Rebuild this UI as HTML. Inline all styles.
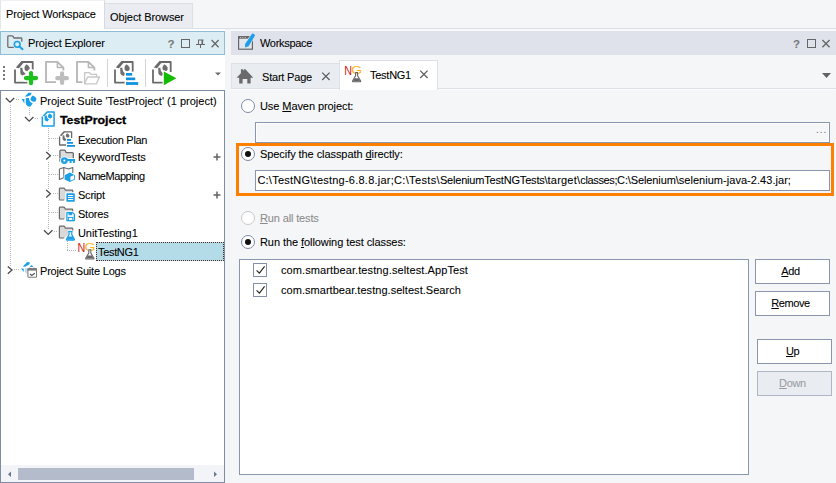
<!DOCTYPE html>
<html>
<head>
<meta charset="utf-8">
<title>TestNG1</title>
<style>
html,body{margin:0;padding:0;}
body{width:836px;height:483px;overflow:hidden;background:#f5f6f8;font-family:"Liberation Sans",sans-serif;font-size:11px;color:#000;position:relative;}
.abs{position:absolute;}
svg{position:absolute;overflow:visible;}
.t{position:absolute;white-space:nowrap;line-height:14px;height:14px;-webkit-text-stroke:0.08px currentColor;}
u{text-decoration:underline;text-underline-offset:1px;text-decoration-thickness:1px;}
/* top tabs */
#topline{left:0;top:28px;width:836px;height:1px;background:#dcdfe6;}
#tab1{left:0;top:0;width:105px;height:29px;background:#fff;border-right:1px solid #d5d9e1;border-left:1px solid #e2e5ea;border-top:1px solid #eef0f3;box-sizing:border-box;}
#tab2{left:105px;top:3px;width:88px;height:26px;background:#eaecf1;border:1px solid #dcdfe6;border-left:none;box-sizing:border-box;}
#underline{left:0;top:29px;width:836px;height:2px;background:#f8f9fa;}
/* panels */
#leftbg{left:0;top:29px;width:225px;height:454px;background:#fff;}
#split{left:225px;top:29px;width:6px;height:454px;background:#f4f5f7;}
#pehead{left:0;top:31px;width:225px;height:24px;background:#dceef4;border:1px solid #8fbdd6;box-sizing:border-box;}
#wshead{left:231px;top:31px;width:605px;height:24px;background:#dfe2ea;}
/* tree */
#tree{left:0;top:90px;width:225px;height:393px;background:#fff;border:1px solid #808ca4;box-sizing:border-box;}
.sel{left:96px;top:242px;width:128px;height:19px;background:#b4dbe8;border:1px dotted #4a2a20;box-sizing:border-box;}
.hd{position:absolute;height:1px;background-image:linear-gradient(90deg,#9a9a9a 50%,transparent 50%);background-size:2px 1px;}
.vd{position:absolute;width:1px;background-image:linear-gradient(180deg,#9a9a9a 50%,transparent 50%);background-size:1px 2px;}
/* scrollbar */
#hsb{left:1px;top:465px;width:223px;height:17px;background:#f3f4f7;}
#thumb{left:17px;top:3px;width:176px;height:12px;background:#b4bccc;}
/* workspace tabs */
#tabstart{left:231px;top:63px;width:109px;height:26px;background:#e9ecf1;border:1px solid #dde0e7;border-bottom:none;box-sizing:border-box;}
#tabng{left:339px;top:60px;width:99px;height:30px;background:#fff;border:1px solid #dde0e7;border-bottom:none;box-sizing:border-box;}
#tabline{left:231px;top:88px;width:109px;height:1px;background:#dde0e7;}
#tabline2{left:438px;top:88px;width:398px;height:1px;background:#dde0e7;}
.radio{position:absolute;width:14px;height:14px;border:1px solid #7f8ca3;border-radius:50%;background:#fff;box-sizing:border-box;}
.radio.on::after{content:"";position:absolute;left:3px;top:3px;width:6px;height:6px;border-radius:50%;background:#111;}
.radio.dis{border-color:#c9c9c9;}
.edit{position:absolute;box-sizing:border-box;border:1px solid #8a96ad;background:#fff;}
.btn{-webkit-text-stroke:0.08px currentColor;position:absolute;box-sizing:border-box;border:1px solid #8a96ad;background:#fff;text-align:center;line-height:23px;height:25px;width:75px;padding-right:4px;}
.btn.dis{background:#e9ecf0;color:#9a9da5;border-color:#aeb6c7;}
#hl{left:236px;top:143px;width:598px;height:53px;border:3px solid #ff8000;box-sizing:border-box;}
.cb{position:absolute;width:14px;height:14px;border:1px solid #8390a6;background:#fff;box-sizing:border-box;}
</style>
</head>
<body>
<!-- top tabs -->
<div class="abs" id="underline"></div>
<div class="abs" id="leftbg"></div>
<div class="abs" id="split"></div>
<div class="abs" id="topline"></div>
<div class="abs" id="tab1"></div>
<div class="abs" id="tab2"></div>
<div class="t" style="letter-spacing:-0.14px;left:6px;top:7px;">Project Workspace</div>
<div class="t" style="letter-spacing:-0.09px;left:110px;top:10px;">Object Browser</div>

<!-- Project explorer header -->
<div class="abs" id="pehead"></div>
<div class="t" style="letter-spacing:-0.09px;left:28px;top:36px;">Project Explorer</div>
<!--ICON:pehead-->
<!-- workspace header -->
<div class="abs" id="wshead"></div>
<div class="t" style="letter-spacing:-0.31px;left:260px;top:36px;">Workspace</div>
<!--ICON:wshead-->

<!-- pe header icon -->
<svg style="left:0;top:0" width="836" height="90" viewBox="0 0 836 90">
 <g fill="none" stroke="#6e6e6e" stroke-width="1.3" stroke-linejoin="round" stroke-linecap="round">
  <path d="M13.3 47.4 H8.6 Q7.8 47.4 7.8 46.6 V36.6 Q7.8 35.8 8.6 35.8 H12 Q12.8 35.8 13.2 36.6 L13.9 38 H21 Q21.8 38 21.8 38.8 V41.2"/>
 </g>
 <circle cx="17.2" cy="44.3" r="2.9" fill="none" stroke="#1b9fe6" stroke-width="1.5"/>
 <path d="M19.4 46.5 L22.6 49.2" stroke="#1b9fe6" stroke-width="1.9" stroke-linecap="round"/>
 <!-- header buttons left -->
 <text x="167.4" y="47.8" font-size="11.5" font-weight="bold" fill="#777" font-family="Liberation Sans, sans-serif">?</text>
 <rect x="181.5" y="39.5" width="8" height="8" fill="none" stroke="#666" stroke-width="1"/>
 <g stroke="#666" stroke-width="1" fill="none">
  <path d="M198 40 H203.5 M198.5 40 V44.5 M196 44.5 H205 M200.5 44.5 V48"/><path d="M202.3 40 V44.5" stroke-width="1.6"/>
  <path d="M211.6 40 L218.6 47.2 M218.6 40 L211.6 47.2" stroke-width="1.3"/>
 </g>
 <!-- workspace header icon -->
 <rect x="238.6" y="36.6" width="13.8" height="12.6" fill="#e3e6ed" stroke="#676767" stroke-width="1.2"/>
 <rect x="238" y="36" width="15" height="2.7" fill="#676767"/>
 <g fill="#c4c4c4"><rect x="240" y="36.9" width="1.1" height="1"/><rect x="242.3" y="36.9" width="1.1" height="1"/><rect x="244.6" y="36.9" width="1.1" height="1"/></g>
 <path d="M252.2 33.6 Q254.4 33.4 255 35.6 L248.6 46.2 L245.2 47.6 L245 44.2 Z" fill="#1b9fe6" stroke="#dfe2ea" stroke-width="1.4" paint-order="stroke" stroke-linejoin="round"/>
 <!-- header buttons right -->
 <text x="793" y="47.8" font-size="11.5" font-weight="bold" fill="#777" font-family="Liberation Sans, sans-serif">?</text>
 <rect x="807.5" y="39.5" width="8" height="8" fill="none" stroke="#666" stroke-width="1"/>
 <path d="M822.4 40 L829.6 47.2 M829.6 40 L822.4 47.2" stroke="#666" stroke-width="1.3" fill="none"/>
 <!-- tab dropdown -->
 <path d="M822 73 H831 L826.5 78 Z" fill="#5f6368"/>
 <!-- toolbar grip -->
 <g fill="#7a7a7a"><rect x="3" y="66" width="2" height="2"/><rect x="3" y="70" width="2" height="2"/><rect x="3" y="74" width="2" height="2"/><rect x="3" y="78" width="2" height="2"/></g>
 <!-- separators -->
 <rect x="107" y="59" width="1" height="28" fill="#d4d4d4"/>
 <rect x="145" y="59" width="1" height="28" fill="#d4d4d4"/>
 <path d="M215 72.5 H221 L218 75.5 Z" fill="#6a6a6a"/>
 <!-- tc doc symbol -->
 <defs>
  <g id="tcdoc">
   <path d="M1 9 V22.2 H18.7 V1.6 H8" fill="none" stroke="#6a6a6a" stroke-width="1.8" stroke-linejoin="round"/>
   <path d="M1.8 7.2 L7.4 0.7 H11 L5 7.8 Z" fill="#6a6a6a"/>
   <path d="M12.2 3.8 Q14.6 4.6 15.6 7 Q16.2 9.6 14.2 10.6 Q11.6 11.2 10.6 9 Q9.8 6.4 12.2 3.8 Z" fill="#6f6f6f"/>
   <path d="M6.2 7.4 H8.4 Q8.2 11.4 11.6 13.2 L10 15.6 Q7.4 15.4 6.4 13.4 Z" fill="#6f6f6f"/>
  </g>
 </defs>
 <!-- icon 1: new project -->
 <use href="#tcdoc" x="14" y="60.4"/>
 <path d="M31 72.6 V83.6 M25.5 78.1 H36.5" stroke="#fff" stroke-width="7.4" stroke-linecap="round"/>
 <path d="M31 73 V83.2 M25.9 78.1 H36.1" stroke="#1dc01d" stroke-width="4.2" stroke-linecap="round"/>
 <!-- icon 2: new item (disabled) -->
 <g fill="none" stroke="#b6b6b6" stroke-width="1.8" stroke-linejoin="round">
  <path d="M63.4 70.4 V67.6 L57.4 61.9 H46 V82.2 H56"/>
  <path d="M57.4 61.9 V67.6 H63.4" stroke-width="1.5"/>
 </g>
 <path d="M62.1 73.4 V83 M57.3 78.2 H66.9" stroke="#bdbdbd" stroke-width="4.2" stroke-linecap="round"/>
 <!-- icon 3: open (disabled) -->
 <g fill="none" stroke="#b6b6b6" stroke-width="1.8" stroke-linejoin="round">
  <path d="M94.4 70.4 V67.6 L88.4 61.9 H77 V82.2 H82.4"/>
  <path d="M88.4 61.9 V67.6 H94.4" stroke-width="1.5"/>
 </g>
 <g fill="#fff" stroke="#c6c6c6" stroke-width="1.3" stroke-linejoin="round">
  <path d="M84.6 83.6 V72.6 H89.6 L90.8 74.4 H96.6 V76.6"/>
  <path d="M84.6 83.8 L87.6 77 H99.4 L96.4 83.8 Z"/>
 </g>
 <!-- icon 4: execution plan -->
 <use href="#tcdoc" x="114" y="60.4"/>
 <rect x="124.6" y="71.6" width="15" height="15" fill="#fff"/>
 <g fill="#0f92df"><rect x="126" y="73" width="6.2" height="2.7"/><rect x="126" y="77.5" width="9.2" height="2.7"/><rect x="126" y="82.1" width="12.2" height="2.8"/></g>
 <!-- icon 5: run project -->
 <use href="#tcdoc" x="152" y="60.4"/>
 <rect x="163" y="72" width="9.5" height="12" fill="#fff"/>
 <path d="M163.8 71.4 V85.2 L176.4 78.2 Z" fill="#14bc00" stroke="#fff" stroke-width="2.4" stroke-linejoin="round" paint-order="stroke"/>
</svg>


<!-- tree -->
<div class="abs" id="tree"></div>
<div class="abs sel"></div>
<!--ICON:tree-->
<div class="t" style="left:40px;top:94px;">Project Suite 'TestProject' (1 project)</div>
<div class="t" style="left:60px;top:113px;font-weight:bold;-webkit-text-stroke:0.3px #000;transform:scaleX(1.12);transform-origin:0 0;">TestProject</div>
<div class="t" style="letter-spacing:-0.3px;left:78px;top:133px;">Execution Plan</div>
<div class="t" style="letter-spacing:-0.07px;left:78px;top:150px;">KeywordTests</div>
<div class="t" style="letter-spacing:-0.45px;left:78px;top:169px;">NameMapping</div>
<div class="t" style="letter-spacing:-0.23px;left:78px;top:188px;">Script</div>
<div class="t" style="letter-spacing:-0.22px;left:78px;top:207px;">Stores</div>
<div class="t" style="letter-spacing:-0.07px;left:78px;top:226px;">UnitTesting1</div>
<div class="t" style="left:98px;top:245px;letter-spacing:-0.33px;">TestNG1</div>
<div class="t" style="letter-spacing:-0.19px;left:40px;top:264px;">Project Suite Logs</div>
<div class="abs" id="hsb"><div class="abs" id="thumb"></div></div>
<!--ICON:scroll-->

<!-- workspace tabs -->
<div class="abs" id="tabstart"></div>
<div class="abs" id="tabline"></div>
<div class="abs" id="tabline2"></div>
<div class="abs" style="left:231px;top:89px;width:604px;height:1px;background:#fdfdfe;"></div>
<div class="abs" id="tabng"></div>
<div class="t" style="letter-spacing:-0.2px;left:262px;top:70px;">Start Page</div>
<div class="t" style="left:370px;top:68px;letter-spacing:-0.26px;">TestNG1</div>
<!--ICON:tabs-->

<!-- content -->
<div class="radio" style="left:241px;top:99px;"></div>
<div class="t" style="letter-spacing:-0.08px;left:260px;top:99px;">Use <u>M</u>aven project:</div>
<div class="edit" style="left:255px;top:122px;width:575px;height:21px;background:#f5f6f8;box-shadow:inset 0 0 0 1px #fff;"></div>
<div class="t" style="left:816px;top:123px;color:#777;letter-spacing:1px;font-size:10px;">...</div>
<div class="abs" id="hl"></div>
<div class="radio on" style="left:241px;top:147px;"></div>
<div class="t" style="letter-spacing:-0.07px;left:260px;top:147px;">Specify the classpath <u>d</u>irectly:</div>
<div class="edit" style="left:255px;top:170px;width:575px;height:21px;"></div>
<div class="t" style="left:257px;top:173px;width:540px;"><span style="position:absolute;left:0.4px;letter-spacing:0.240px;">C:\TestNG\</span><span style="position:absolute;left:56.6px;letter-spacing:0.233px;">testng-6.8.8.jar;</span><span style="position:absolute;left:137.0px;letter-spacing:0.345px;">C:\Tests\</span><span style="position:absolute;left:182.9px;letter-spacing:-0.183px;">SeleniumTestNGTests\</span><span style="position:absolute;left:290.5px;letter-spacing:0.230px;">target\</span><span style="position:absolute;left:323.3px;letter-spacing:-0.369px;">classes;</span><span style="position:absolute;left:360.1px;letter-spacing:-0.115px;">C:\Selenium\</span><span style="position:absolute;left:421.7px;letter-spacing:0.044px;">selenium-java-2.43.jar;</span></div>
<div class="radio dis" style="left:241px;top:211px;"></div>
<div class="t" style="letter-spacing:-0.14px;left:260px;top:211px;color:#8b8b8b;"><u>R</u>un all tests</div>
<div class="radio on" style="left:241px;top:235px;"></div>
<div class="t" style="letter-spacing:-0.07px;left:260px;top:235px;">Run the <u>f</u>ollowing test classes:</div>
<div class="edit" style="left:239px;top:259px;width:510px;height:216px;"></div>
<div class="cb" style="left:253px;top:263px;"></div>
<div class="t" style="letter-spacing:0.1px;left:281px;top:263px;">com.smartbear.testng.seltest.AppTest</div>
<div class="cb" style="left:253px;top:283px;"></div>
<div class="t" style="letter-spacing:0.04px;left:281px;top:283px;">com.smartbear.testng.seltest.Search</div>
<svg style="left:0;top:0" width="836" height="483" viewBox="0 0 836 483">
 <defs>
  <g id="fold16">
   <path d="M5.6 12.4 H1.6 Q0.8 12.4 0.8 11.6 V1.4 Q0.8 0.6 1.6 0.6 H5 Q5.8 0.6 6.2 1.4 L6.8 2.6 H13.4 Q14.2 2.6 14.2 3.4 V5" fill="#d9d9d9" stroke="#6a6a6a" stroke-width="1.2" stroke-linejoin="round"/>
  </g>
  <g id="chevd"><path d="M0 0 L4.2 4.2 L8.4 0" fill="none" stroke="#4a4a4a" stroke-width="1.3"/></g>
  <g id="chevr"><path d="M0 0 L4.2 3.7 L0 7.4" fill="none" stroke="#4a4a4a" stroke-width="1.3"/></g>
  <g id="flask">
   <path d="M3.4 0.4 H6.4 M3.9 0.4 V3.6 L0.8 8.8 Q0.6 9.6 1.6 9.6 H8.2 Q9.2 9.6 9 8.8 L5.9 3.6 V0.4" fill="#fff" stroke="#666" stroke-width="1.1" stroke-linejoin="round"/>
   <path d="M2.9 6 H6.9 L8.6 9 H1.2 Z" fill="#666"/>
  </g>
 </defs>
 <!-- dotted connectors -->
 <g fill="none" stroke="#b4b4b4" stroke-width="1" stroke-dasharray="1 1" shape-rendering="crispEdges">
  <path d="M10.5 105 V266"/>
  <path d="M16 99.5 H20"/>
  <path d="M29.5 108 V116"/>
  <path d="M35 118.5 H39"/>
  <path d="M48.5 128 V229"/>
  <path d="M49 138.5 H58"/>
  <path d="M53 155.5 H58"/>
  <path d="M49 174.5 H58"/>
  <path d="M53 193.5 H58"/>
  <path d="M49 212.5 H58"/>
  <path d="M54 231.5 H58"/>
  <path d="M67.5 241 V251"/>
  <path d="M67 250.5 H77"/>
  <path d="M14 269.5 H19"/>
 </g>
 <!-- expanders -->
 <g fill="#fff"><rect x="45" y="151" width="7" height="11"/><rect x="45" y="189" width="7" height="11"/></g>
 <use href="#chevd" x="5.8" y="98"/>
 <use href="#chevd" x="25" y="117"/>
 <use href="#chevr" x="46.2" y="152"/>
 <use href="#chevr" x="46.2" y="190"/>
 <use href="#chevd" x="44" y="230.2"/>
 <use href="#chevr" x="7.8" y="266.4"/>
 <!-- TC suite logo -->
 <g fill="#1b9fe6">
  <path d="M24.8 96.6 L28.6 92.8 H31.6 L30.6 95.2 L27.4 96.6 Z"/>
  <path d="M21.6 99 H24.4 V103.6 Z"/>
  <path d="M25.8 98 H29 Q28.8 101.6 32.8 103.4 L30.2 106.8 Q26.4 106.6 25.8 103.6 Z"/>
  <path d="M32.6 95.4 Q35.6 96.2 36.4 98.6 Q36.6 101.2 34.2 101.8 Q31.4 102 30.6 99.6 Q30.4 97.2 32.6 95.4 Z"/>
 </g>
 <!-- project icon -->
 <path d="M42.3 116.6 V125.9 H54.1 V112.1 H47.4" fill="none" stroke="#1b9fe6" stroke-width="1.5" stroke-linejoin="round"/>
 <path d="M42.6 115.8 L46.6 111.4 H48.8 L44.2 116.2 Z" fill="#1b9fe6"/>
 <path d="M49.4 113.6 Q51.6 114.2 52.2 116 Q52.4 118 50.6 118.4 Q48.6 118.6 47.9 116.8 Q47.6 115 49.4 113.6 Z" fill="#1b9fe6"/>
 <path d="M44.6 115.4 H46.8 Q46.8 118.4 49 119.4 L47.6 121.4 Q45.2 121.2 44.6 119.4 Z" fill="#1b9fe6"/>
 <!-- execution plan -->
 <path d="M59.6 136.4 V145 H71.6 V131.8 H64.6" fill="none" stroke="#6a6a6a" stroke-width="1.3" stroke-linejoin="round"/>
 <path d="M59.8 135.6 L63.6 131.2 H65.8 L61.4 136 Z" fill="#6a6a6a"/>
 <path d="M67 133.2 Q68.8 133.8 69.4 135.4 Q69.6 137.2 68.2 137.6 Q66.4 137.8 65.8 136.2 Q65.4 134.6 67 133.2 Z" fill="#6f6f6f"/>
 <path d="M62.6 135.2 H64.2 Q64.2 138 66.4 139.2 L65.2 141 Q63.2 140.8 62.6 139.2 Z" fill="#6f6f6f"/>
 <rect x="66" y="138" width="10" height="10" fill="#fff"/>
 <g fill="#0f92df"><rect x="67" y="139" width="4" height="1.8"/><rect x="67" y="142" width="6" height="1.8"/><rect x="67" y="145" width="8" height="1.8"/></g>
 <!-- keyword tests -->
 <path d="M59.9 162 V151 Q59.9 150.1 60.8 150.1 H64.4 Q65.2 150.1 65.5 150.9 L66.1 152.6 H72.4 Q73.3 152.6 73.3 153.5 V162 Z" fill="#dddddd" stroke="#6a6a6a" stroke-width="1.3" stroke-linejoin="round"/>
 <rect x="59" y="158.2" width="16.4" height="6" fill="#fff"/>
 <path d="M59.9 158.4 V161.6" stroke="#6a6a6a" stroke-width="1.3"/>
 <g><circle cx="64.4" cy="160.6" r="2.2" fill="#fff" stroke="#fff" stroke-width="4"/><path d="M66 160.6 H74.6 M72 160.6 V163.4 M74.2 160.6 V163.4" stroke="#fff" stroke-width="3.6" fill="none"/>
 <circle cx="64.4" cy="160.6" r="2.3" fill="#fff" stroke="#1b9fe6" stroke-width="2.3"/><path d="M66.8 160.1 H75 M70.6 160.1 V163 M73.9 160.1 V163" stroke="#1b9fe6" stroke-width="2" fill="none"/></g>
 <!-- name mapping -->
 <path d="M59.4 169 L63.8 167.4 L68.4 169 L72.8 167.4 V173 M59.4 169 V179.4 L63.8 177.8 M63.8 167.4 V177.8" fill="none" stroke="#6a6a6a" stroke-width="1.1" stroke-linejoin="round"/>
 <path d="M64.6 175.2 L69.8 172.6 L75 175.2 V179.6 L69.8 182 L64.6 179.6 Z" fill="#1b9fe6" stroke="#fff" stroke-width="1.6" paint-order="stroke"/>
 <path d="M70.4 176.8 L74.2 175 V179 L70.4 180.8 Z" fill="#fff"/>
 <!-- script -->
 <use href="#fold16" x="58.6" y="187.6"/>
 <rect x="65.4" y="192.4" width="10" height="10" fill="#fff"/>
 <rect x="66.4" y="193.2" width="8.4" height="8.6" rx="0.8" fill="#1b9fe6"/>
 <path d="M68 195.5 H73.2 M68 197.5 H73.2 M68 199.5 H73.2" stroke="#fff" stroke-width="1"/>
 <!-- stores -->
 <use href="#fold16" x="58.6" y="206.6"/>
 <rect x="65.4" y="211.4" width="10" height="10" fill="#fff"/>
 <path d="M66.9 212.6 H72.6 L74.4 214.4 V220.6 H66.9 Z" fill="#fff" stroke="#1b9fe6" stroke-width="1.3" stroke-linejoin="round"/>
 <rect x="68.6" y="212.6" width="3.6" height="2.6" fill="#1b9fe6"/>
 <rect x="68.4" y="217.4" width="4.4" height="3.2" fill="none" stroke="#1b9fe6" stroke-width="1"/>
 <!-- unit testing -->
 <use href="#fold16" x="58.6" y="225.6"/>
 <path d="M65 240.6 L68.4 234.2 V230.6 H72.4 V234.2 L75.8 240.6 Z" fill="#fff"/>
 <path d="M68.2 231.6 H72.6 M69 231.6 V234.6 L66.4 239.4 Q66.2 240.2 67 240.2 H73.8 Q74.6 240.2 74.4 239.4 L71.8 234.6 V231.6" fill="#fff" stroke="#1b9fe6" stroke-width="1.2" stroke-linejoin="round"/>
 <path d="M68.2 236.6 H72.6 L74.2 239.8 H66.6 Z" fill="#1b9fe6"/>
 <!-- NG icon in tree -->
 <text transform="translate(77.5 252) scale(0.9 1)" font-size="12" font-family="Liberation Sans, sans-serif" fill="#cc2020">N</text>
 <text transform="translate(84.4 250.9) scale(1.32 1)" font-size="10.6" font-family="Liberation Sans, sans-serif" fill="#fdb515">G</text>
 <use href="#flask" x="84.9" y="249.4"/>
 <!-- logs icon -->
 <g fill="#1b9fe6">
  <path d="M22.8 266.4 L27.2 262.1 L30.1 262.6 L29.2 264.6 L25.1 266.8 Z"/>
  <path d="M21 268.2 L23.8 268.7 L23.6 272 Z"/>
  <path d="M25.1 268.2 H27.3 V274 Q25.4 273.6 25.1 272 Z" fill="#9fd4f4"/>
  <path d="M30 266.2 L31.8 264.9 Q33.2 265.8 33.6 267.8 H30.4 Z"/>
 </g>
 <rect x="26.6" y="266.9" width="11.2" height="11.8" fill="#fff"/>
 <rect x="27.9" y="268.7" width="8.6" height="8.6" rx="0.8" fill="#fff" stroke="#7c7c7c" stroke-width="1.1"/>
 <rect x="27.4" y="268.3" width="9.6" height="2.3" fill="#7a7a7a"/>
 <path d="M29.9 267.7 V269 M34.2 267.7 V269" stroke="#7a7a7a" stroke-width="1.5"/>
 <path d="M30.1 274 L31.8 275.5 L34.8 273.2" fill="none" stroke="#555" stroke-width="1.2"/>
 <!-- plus marks -->
 <path d="M213.5 157 H220.5 M217 153.5 V160.5 M213.5 195 H220.5 M217 191.5 V198.5" stroke="#636363" stroke-width="1.5" fill="none"/>
 <!-- scrollbar arrows -->
 <path d="M11 471.4 V477 L8 474.2 Z M214 471.4 V477 L217 474.2 Z" fill="#6a7790"/>
 <!-- tab icons: home -->
 <path d="M237 77.6 L244.9 69 L247.4 71.6 M240.8 73 V69.2 H243 V71 M253 77.6 L244.9 69" fill="none" stroke="none"/>
 <path d="M236.6 77.8 L240.9 73.2 V69.2 H243.1 V70.8 L244.9 68.8 L253.3 77.8 H250.6 V83.4 H247.3 V79 H242.6 V83.4 H239.2 V77.8 Z" fill="#6a6a6a"/>
 <!-- tab close x -->
 <path d="M322.2 72.6 L329.6 80 M329.6 72.6 L322.2 80" stroke="#5a5a5a" stroke-width="1.2" fill="none"/>
 <path d="M420.2 70.6 L427.6 78 M427.6 70.6 L420.2 78" stroke="#5a5a5a" stroke-width="1.2" fill="none"/>
 <!-- NG icon in tab -->
 <text transform="translate(344.3 74.8) scale(0.9 1)" font-size="12" font-family="Liberation Sans, sans-serif" fill="#cc2020">N</text>
 <text transform="translate(351.2 73.7) scale(1.32 1)" font-size="10.6" font-family="Liberation Sans, sans-serif" fill="#fdb515">G</text>
 <use href="#flask" x="351.7" y="72.2"/>
 <!-- check marks -->
 <path d="M256.6 270.4 L259.4 273.2 L264.6 266.4" fill="none" stroke="#222" stroke-width="1.1"/>
 <path d="M256.6 290.4 L259.4 293.2 L264.6 286.4" fill="none" stroke="#222" stroke-width="1.1"/>
</svg>

<div class="btn" style="letter-spacing:-0.43px;left:755px;top:259px;"><u>A</u>dd</div>
<div class="btn" style="letter-spacing:-0.43px;left:755px;top:291px;"><u>R</u>emove</div>
<div class="btn" style="letter-spacing:-0.6px;left:757px;top:339px;"><u>U</u>p</div>
<div class="btn dis" style="letter-spacing:-0.33px;left:757px;top:371px;"><u>D</u>own</div>
</body>
</html>
